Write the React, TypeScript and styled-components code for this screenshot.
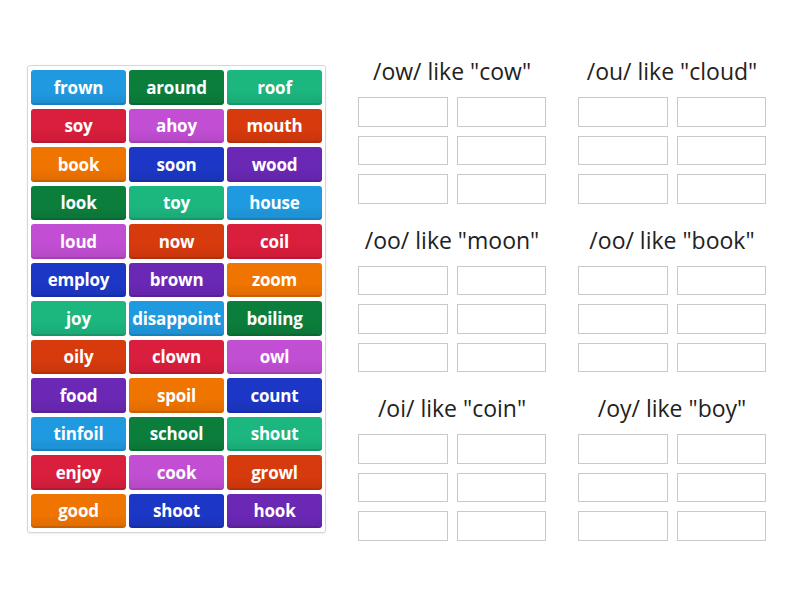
import React from "react";
import styled, { createGlobalStyle } from "styled-components";

const palette: Record<string, string> = {
	blue: "#1f9ae0",
	green: "#0b7e3c",
	teal: "#1cb67f",
	red: "#da1e3d",
	pink: "#c24ed3",
	rust: "#d73a0d",
	orange: "#f07400",
	royal: "#1c37c6",
	purple: "#6a28b5",
};

const words: [string, string][] = [
	["frown", "blue"], ["around", "green"], ["roof", "teal"],
	["soy", "red"], ["ahoy", "pink"], ["mouth", "rust"],
	["book", "orange"], ["soon", "royal"], ["wood", "purple"],
	["look", "green"], ["toy", "teal"], ["house", "blue"],
	["loud", "pink"], ["now", "rust"], ["coil", "red"],
	["employ", "royal"], ["brown", "purple"], ["zoom", "orange"],
	["joy", "teal"], ["disappoint", "blue"], ["boiling", "green"],
	["oily", "rust"], ["clown", "red"], ["owl", "pink"],
	["food", "purple"], ["spoil", "orange"], ["count", "royal"],
	["tinfoil", "blue"], ["school", "green"], ["shout", "teal"],
	["enjoy", "red"], ["cook", "pink"], ["growl", "rust"],
	["good", "orange"], ["shoot", "royal"], ["hook", "purple"],
];

const groups = [
	'/ow/ like "cow"',
	'/ou/ like "cloud"',
	'/oo/ like "moon"',
	'/oo/ like "book"',
	'/oi/ like "coin"',
	'/oy/ like "boy"',
];

const App = () => {
	return (
		<>
			<GlobalStyle />
			<Page>
				<WordBank>
					{words.map(([word, color]) => (
						<Tile key={word} color={palette[color]}>
							{word}
						</Tile>
					))}
				</WordBank>
				<Groups>
					{groups.map((title, i) => (
						<Group key={i}>
							<GroupTitle>{title}</GroupTitle>
							<Slots>
								{Array.from({ length: 6 }).map((_, j) => (
									<Slot key={j} />
								))}
							</Slots>
						</Group>
					))}
				</Groups>
			</Page>
		</>
	);
};

export default App;

const GlobalStyle = createGlobalStyle`
	html, body {
		margin: 0;
		padding: 0;
		background: #ffffff;
		font-family: "Open Sans", "Liberation Sans", sans-serif;
	}
`;

const Page = styled.div`
	display: flex;
	align-items: flex-start;
	width: 800px;
	height: 600px;
	padding-left: 27px;
	box-sizing: border-box;
`;

const WordBank = styled.div`
	margin-top: 65px;
	width: 299px;
	box-sizing: border-box;
	border: 1px solid #d6d6d6;
	border-radius: 3px;
	padding: 4px 3px 4px 3px;
	display: grid;
	grid-template-columns: repeat(3, 1fr);
	grid-auto-rows: 34.5px;
	column-gap: 3px;
	row-gap: 4px;
	box-shadow: 0 1px 2px rgba(0, 0, 0, 0.08);
`;

const Tile = styled.div<{ color: string }>`
	display: flex;
	align-items: center;
	justify-content: center;
	border-radius: 3px;
	background: linear-gradient(
		180deg,
		${(p) => p.color} 0%,
		${(p) => p.color} 60%,
		rgba(0, 0, 0, 0.08) 100%
	), ${(p) => p.color};
	background-blend-mode: normal;
	color: #ffffff;
	font-weight: 700;
	font-size: 17px;
	letter-spacing: -0.2px;
	box-shadow: inset 0 -2px 0 rgba(0, 0, 0, 0.1);
`;

const Groups = styled.div`
	margin-top: 53px;
	margin-left: 32px;
	display: grid;
	grid-template-columns: 188px 188px;
	column-gap: 32px;
	row-gap: 18px;
`;

const Group = styled.div`
	display: flex;
	flex-direction: column;
	align-items: stretch;
`;

const GroupTitle = styled.div`
	height: 36px;
	line-height: 36px;
	margin-bottom: 8px;
	text-align: center;
	font-size: 23px;
	color: #222222;
	white-space: nowrap;
`;

const Slots = styled.div`
	display: grid;
	grid-template-columns: 1fr 1fr;
	grid-auto-rows: 29.5px;
	column-gap: 9px;
	row-gap: 9px;
`;

const Slot = styled.div`
	border: 1px solid #c9c9c9;
	box-sizing: border-box;
`;
